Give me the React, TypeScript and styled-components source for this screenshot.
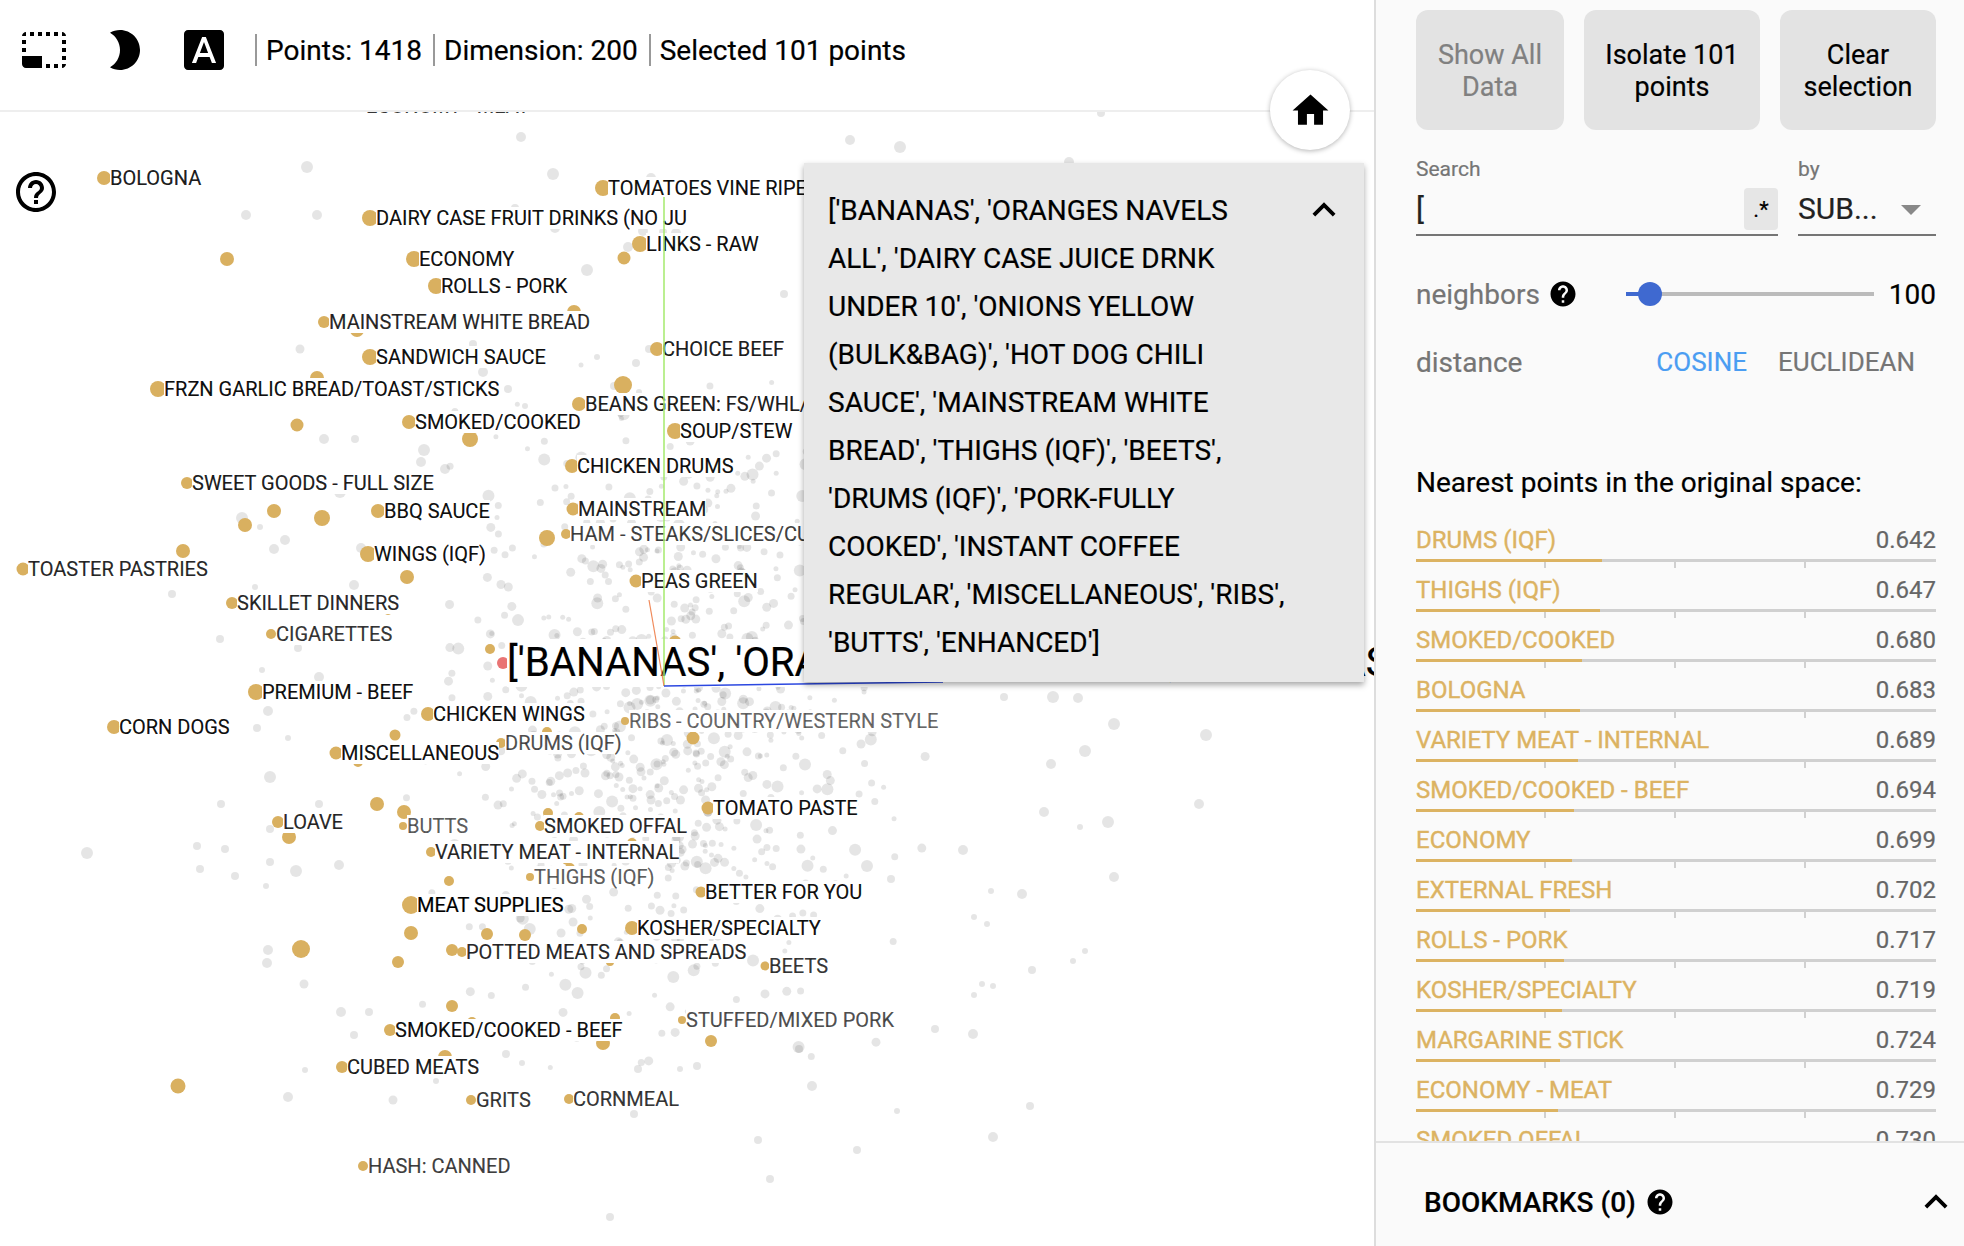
import React from "react";
import styled, { createGlobalStyle } from "styled-components";

const GOLD = "#d9b060";

const GlobalStyle = createGlobalStyle`
  html, body {
    margin: 0;
    padding: 0;
    background: #fff;
    font-family: Roboto, "Liberation Sans", sans-serif;
    color: #000;
    -webkit-text-stroke: 0.2px;
  }
`;

// [text, textX, centerY, dotX, dotRadius, textAlpha]
type LabelRow = [string, number, number, number, number, number];

const POINT_LABELS: LabelRow[] = [
  ["ECONOMY - MEAT", 366, 106, 361, 5, 0.8],
  ["BOLOGNA", 110, 178, 104, 7, 0.9],
  ["TOMATOES VINE RIPE", 608, 188, 603, 8, 0.95],
  ["DAIRY CASE FRUIT DRINKS (NO JU", 376, 218, 370, 8, 0.95],
  ["LINKS - RAW", 646, 244, 640, 8, 0.95],
  ["ECONOMY", 419, 259, 414, 8, 0.95],
  ["ROLLS - PORK", 441, 286, 436, 8, 0.95],
  ["MAINSTREAM WHITE BREAD", 329, 322, 324, 6, 0.85],
  ["SANDWICH SAUCE", 376, 357, 370, 8, 0.95],
  ["FRZN GARLIC BREAD/TOAST/STICKS", 164, 389, 158, 8, 0.95],
  ["CHOICE BEEF", 662, 349, 657, 7, 0.9],
  ["BEANS GREEN: FS/WHL/", 585, 404, 579, 7, 0.9],
  ["SMOKED/COOKED", 415, 422, 409, 7, 0.95],
  ["SOUP/STEW", 680, 431, 675, 8, 0.95],
  ["CHICKEN DRUMS", 577, 466, 572, 7, 0.95],
  ["SWEET GOODS - FULL SIZE", 192, 483, 187, 6, 0.9],
  ["BBQ SAUCE", 384, 511, 378, 7, 0.95],
  ["MAINSTREAM", 578, 509, 573, 6.5, 0.9],
  ["HAM - STEAKS/SLICES/CU", 570, 534, 566, 5, 0.75],
  ["WINGS (IQF)", 374, 554, 368, 8, 0.95],
  ["TOASTER PASTRIES", 28, 569, 23, 6.5, 0.85],
  ["PEAS GREEN", 641, 581, 636, 6.5, 0.9],
  ["SKILLET DINNERS", 237, 603, 232, 6, 0.85],
  ["CIGARETTES", 276, 634, 271, 5, 0.8],
  ["PREMIUM - BEEF", 262, 692, 256, 8, 0.95],
  ["CHICKEN WINGS", 433, 714, 428, 7, 0.95],
  ["RIBS - COUNTRY/WESTERN STYLE", 629, 721, 625, 4, 0.6],
  ["CORN DOGS", 119, 727, 114, 7, 0.95],
  ["DRUMS (IQF)", 505, 743, 501, 5, 0.7],
  ["MISCELLANEOUS", 341, 753, 336, 6.5, 0.95],
  ["TOMATO PASTE", 713, 808, 708, 6.5, 0.95],
  ["LOAVE", 283, 822, 278, 6, 0.85],
  ["BUTTS", 407, 826, 403, 4, 0.65],
  ["SMOKED OFFAL", 544, 826, 540, 5, 0.85],
  ["VARIETY MEAT - INTERNAL", 435, 852, 431, 5, 0.85],
  ["THIGHS (IQF)", 534, 877, 530, 4, 0.65],
  ["BETTER FOR YOU", 705, 892, 701, 5.5, 0.95],
  ["MEAT SUPPLIES", 417, 905, 411, 9, 1],
  ["KOSHER/SPECIALTY", 637, 928, 632, 7, 0.95],
  ["POTTED MEATS AND SPREADS", 466, 952, 462, 5, 0.85],
  ["BEETS", 769, 966, 765, 4.5, 0.8],
  ["STUFFED/MIXED PORK", 686, 1020, 682, 4, 0.7],
  ["SMOKED/COOKED - BEEF", 395, 1030, 390, 6, 0.95],
  ["CUBED MEATS", 347, 1067, 342, 6, 0.9],
  ["GRITS", 476, 1100, 471, 5, 0.8],
  ["CORNMEAL", 573, 1099, 569, 5, 0.8],
  ["HASH: CANNED", 368, 1166, 363, 5, 0.75],
];

// selected points that have no label drawn
const GOLD_DOTS: number[][] = [
  [227, 259, 7], [624, 258, 6.5], [406, 222, 7], [574, 312, 7], [357, 330, 7], [317, 378, 7],
  [623, 385, 9], [656, 404, 6], [297, 425, 6.5], [470, 439, 8], [274, 511, 7], [322, 518, 8],
  [245, 525, 7], [547, 538, 8], [183, 551, 7], [407, 577, 7], [388, 610, 5], [490, 649, 5],
  [675, 642, 6.5], [395, 735, 5.5], [547, 732, 5], [693, 738, 6.5], [358, 762, 5], [377, 804, 7],
  [404, 812, 7], [548, 813, 5], [579, 817, 5], [289, 837, 7], [454, 858, 4], [567, 860, 5],
  [570, 868, 5], [632, 843, 5], [449, 881, 5], [411, 933, 7], [487, 934, 6], [525, 935, 6],
  [582, 929, 5], [301, 949, 9], [452, 950, 6], [398, 962, 6], [610, 962, 4], [452, 1006, 6],
  [472, 1022, 5], [615, 1018, 5], [603, 1043, 7], [445, 1057, 7], [178, 1086, 7.5], [711, 1041, 6],
];

const GRAY_OUTLIERS: number[][] = [
  [1004, 697, 4], [1053, 697, 6], [1078, 698, 5], [1114, 724, 6], [1206, 735, 6], [1085, 751, 6],
  [1051, 764, 5], [1199, 804, 5], [1044, 812, 5], [1108, 822, 6], [1080, 827, 3], [963, 850, 5],
  [1114, 877, 5], [1022, 894, 5], [991, 891, 3], [974, 917, 3], [987, 924, 3], [1085, 951, 3],
  [1073, 961, 3], [1032, 970, 4], [982, 984, 3], [993, 986, 3], [974, 995, 3], [935, 1029, 4],
  [973, 1034, 5], [812, 1086, 5], [1030, 1106, 4], [897, 1111, 3], [993, 1137, 5], [758, 1140, 4],
  [857, 1150, 4], [770, 1179, 4], [610, 1217, 4], [867, 866, 6], [891, 879, 4], [799, 1049, 4],
  [680, 1069, 3], [697, 1066, 4], [638, 1069, 4], [850, 140, 5], [900, 147, 6], [1069, 162, 5],
  [1101, 113, 4], [784, 294, 4], [307, 167, 6], [521, 137, 5], [553, 174, 6], [651, 178, 5],
  [246, 215, 5], [317, 215, 5], [515, 208, 4], [555, 228, 5], [643, 231, 5], [628, 247, 5],
  [587, 270, 6], [558, 328, 5], [300, 349, 4.5], [473, 344, 4], [483, 372, 5], [508, 389, 4],
  [649, 349, 4], [636, 363, 4], [597, 357, 3], [581, 365, 2.5], [614, 386, 4], [639, 392, 3],
  [525, 406, 3], [663, 232, 4], [676, 233, 5], [690, 237, 4], [324, 439, 5], [355, 439, 4],
  [424, 450, 6], [421, 462, 5], [445, 469, 5], [340, 492, 6], [242, 518, 6], [260, 527, 3],
  [285, 540, 5], [274, 549, 5], [361, 548, 5], [172, 594, 4], [255, 587, 3], [354, 585, 5],
  [220, 639, 4], [298, 648, 4], [262, 670, 3], [319, 677, 5], [268, 711, 5], [257, 728, 4],
  [288, 738, 3], [270, 777, 6], [221, 804, 4], [319, 804, 4], [87, 853, 6], [197, 846, 4],
  [225, 849, 4], [200, 869, 4], [235, 876, 4], [266, 886, 3], [270, 862, 4], [296, 871, 6],
  [339, 865, 5], [270, 829, 4], [268, 950, 5], [267, 963, 5], [304, 984, 4.5], [341, 1012, 5],
  [369, 1012, 4], [354, 1035, 4], [305, 1070, 3], [288, 1097, 5], [393, 1100, 4.5], [634, 1114, 4],
  [436, 1081, 3], [506, 1054, 4], [522, 1063, 3], [623, 385, 5], [301, 949, 5], [377, 804, 4],
];

// the dense middle of the cloud, seeded so every render is the same
const makeCloud = (count: number) => {
  let seed = 20731;
  const rand = () => {
    seed = (seed * 16807) % 2147483647;
    return seed / 2147483647;
  };
  const dots: number[][] = [];
  while (dots.length < count) {
    const u = Math.sqrt(-2 * Math.log(rand() + 1e-6));
    const v = rand() * Math.PI * 2;
    const x = 670 + u * Math.cos(v) * 110;
    const y = 720 + u * Math.sin(v) * 170;
    if (x < 400 || x > 960 || y < 380 || y > 1070) continue;
    const r = rand();
    dots.push([x, y, r > 0.92 ? 6 : r > 0.6 ? 4.5 : r > 0.25 ? 3.5 : 2.5]);
  }
  return dots;
};

const CLOUD = makeCloud(900);

const NEAREST = [
  ["DRUMS (IQF)", "0.642", 186],
  ["THIGHS (IQF)", "0.647", 184],
  ["SMOKED/COOKED", "0.680", 166],
  ["BOLOGNA", "0.683", 164],
  ["VARIETY MEAT - INTERNAL", "0.689", 162],
  ["SMOKED/COOKED - BEEF", "0.694", 158],
  ["ECONOMY", "0.699", 156],
  ["EXTERNAL FRESH", "0.702", 154],
  ["ROLLS - PORK", "0.717", 148],
  ["KOSHER/SPECIALTY", "0.719", 146],
  ["MARGARINE STICK", "0.724", 144],
  ["ECONOMY - MEAT", "0.729", 142],
  ["SMOKED OFFAL", "0.730", 140],
] as const;

const Page = styled.div`
  display: flex;
  width: 100%;
  height: 100vh;
  min-height: 1246px;
  overflow: hidden;
`;

const LeftPane = styled.div`
  position: relative;
  flex: 0 0 1374px;
  display: flex;
  flex-direction: column;
`;

const Header = styled.div`
  flex: 0 0 100px;
  display: flex;
  align-items: center;
  padding-left: 20px;
  padding-bottom: 10px;
  border-bottom: 2px solid #eee;
`;

const ToolIcons = styled.div`
  display: flex;
  gap: 32px;
  margin-right: 27px;
`;

const Stat = styled.div`
  height: 32px;
  line-height: 34px;
  padding: 0 11px 0 9px;
  border-left: 2px solid #999;
  font-size: 28px;
  white-space: nowrap;
`;

const Canvas = styled.div`
  position: relative;
  flex: 1;
  overflow: hidden;
`;

const CanvasLayer = styled.svg`
  position: absolute;
  left: 0;
  top: 0;
  width: 1374px;
  height: 1134px;
`;

const PointLabel = styled.span.attrs<{ $x: number; $y: number; $alpha: number }>((p) => ({
  style: { left: p.$x, top: p.$y - 112 - 11, color: `rgba(0,0,0,${p.$alpha})` },
}))<{ $x: number; $y: number; $alpha: number }>`
  position: absolute;
  height: 22px;
  line-height: 22px;
  font-size: 20px;
  background: #fff;
  white-space: nowrap;
`;

const FocusLabel = styled.span`
  position: absolute;
  left: 507px;
  top: 527px;
  height: 48px;
  line-height: 48px;
  font-size: 40.2px;
  background: #fff;
  white-space: nowrap;
`;

const HomeButton = styled.button`
  position: absolute;
  left: 1270px;
  top: 70px;
  width: 80px;
  height: 80px;
  padding: 0;
  display: flex;
  align-items: center;
  justify-content: center;
  border: 0;
  border-radius: 50%;
  background: #fff;
  box-shadow: 0 1px 5px rgba(0, 0, 0, 0.3);
`;

const HelpBadge = styled.div`
  position: absolute;
  left: 12px;
  top: 168px;
  line-height: 0;
`;

const Details = styled.div`
  position: absolute;
  left: 804px;
  top: 163px;
  width: 560px;
  box-sizing: border-box;
  padding: 24px 17px 15px 24px;
  display: flex;
  justify-content: space-between;
  align-items: flex-start;
  background: #e8e8e8;
  box-shadow: 0 3px 6px rgba(0, 0, 0, 0.35);
`;

const DetailsText = styled.div`
  width: 462px;
  font-size: 28px;
  line-height: 48px;
`;

const SidePanel = styled.div`
  flex: 1;
  display: flex;
  flex-direction: column;
  min-width: 0;
  background: #fafafa;
  border-left: 2px solid #ddd;
`;

const SideScroll = styled.div`
  flex: 1;
  min-height: 0;
  overflow: hidden;
  padding: 10px 28px 0 40px;
`;

const ActionRow = styled.div`
  display: grid;
  grid-template-columns: 148px 176px 156px;
  gap: 20px;
`;

const ActionButton = styled.button<{ $muted?: boolean }>`
  height: 120px;
  padding: 2px 10px 0;
  border: 0;
  border-radius: 12px;
  background: #e3e3e3;
  color: ${(p) => (p.$muted ? "#808080" : "#000")};
  font-family: inherit;
  font-size: 27px;
  line-height: 32px;
`;

const SearchRow = styled.div`
  display: grid;
  grid-template-columns: 362px 138px;
  gap: 20px;
  margin-top: 26px;
`;

const FieldLabel = styled.div`
  font-size: 21px;
  line-height: 26px;
  color: #757575;
`;

const FieldBody = styled.div`
  height: 52px;
  display: flex;
  align-items: center;
  justify-content: space-between;
  border-bottom: 2px solid #757575;
  color: #222;
`;

const SearchValue = styled.span`
  font-size: 30px;
`;

const RegexToggle = styled.span`
  width: 34px;
  height: 42px;
  margin-top: 6px;
  align-self: flex-start;
  display: flex;
  align-items: center;
  justify-content: center;
  border-radius: 4px;
  background: #e6e6e6;
  color: #000;
  font-size: 22px;
`;

const CaretDown = styled.span`
  width: 0;
  height: 0;
  margin: 4px 15px 0 0;
  border-left: 10px solid transparent;
  border-right: 10px solid transparent;
  border-top: 10px solid #888;
`;

const NeighborsRow = styled.div`
  display: flex;
  align-items: center;
  height: 40px;
  margin-top: 38px;
  font-size: 28px;
  color: #757575;
`;

const DistanceRow = styled(NeighborsRow)`
  margin-top: 28px;
`;

const NeighborsLabel = styled.div`
  flex: 0 0 210px;
  display: flex;
  align-items: center;
  gap: 8px;
`;

const SliderTrack = styled.div`
  position: relative;
  flex: 0 0 248px;
  height: 4px;
  background: #bbb;
`;

const SliderFill = styled.div`
  width: 24px;
  height: 100%;
  background: #3f69d0;
`;

const SliderThumb = styled.div`
  position: absolute;
  left: 12px;
  top: -10px;
  width: 24px;
  height: 24px;
  border-radius: 50%;
  background: #3f69d0;
`;

const SliderValue = styled.div`
  flex: 1;
  text-align: right;
  color: #000;
`;

const DistanceOptions = styled.div`
  margin-left: auto;
  display: flex;
  gap: 31px;
  padding-right: 21px;
`;

const DistanceOption = styled.span<{ $active?: boolean }>`
  font-size: 26px;
  color: ${(p) => (p.$active ? "#4a9df2" : "#757575")};
`;

const SectionTitle = styled.div`
  margin-top: 81px;
  font-size: 28px;
  line-height: 40px;
`;

const NearestList = styled.div`
  margin-top: 17px;
`;

const NearestRow = styled.div`
  height: 50px;
`;

const NearestLine = styled.div`
  height: 39px;
  display: flex;
  align-items: center;
  justify-content: space-between;
  font-size: 24px;
`;

const NearestName = styled.span`
  color: #dcb362;
  -webkit-text-stroke: 0.4px;
`;

const NearestValue = styled.span`
  color: #666;
`;

const BarTrack = styled.div`
  height: 3px;
  background: #d0d0d0;
`;

const BarFill = styled.div`
  height: 100%;
  background: #dcb362;
`;

const TickRow = styled.div`
  height: 6px;
  display: grid;
  grid-template-columns: repeat(4, 1fr);
`;

const Tick = styled.div`
  border-right: 2px solid #d0d0d0;

  &:last-child {
    border-right: 0;
  }
`;

const Bookmarks = styled.div`
  flex: 0 0 88px;
  display: flex;
  align-items: center;
  gap: 9px;
  padding: 15px 5px 0 48px;
  border-top: 2px solid #e2e2e2;
  font-size: 28px;
  font-weight: 500;
`;

const ChevronSlot = styled.div`
  margin-left: auto;
  line-height: 0;
`;

const HELP_PATH =
  "M12 2C6.48 2 2 6.48 2 12s4.48 10 10 10 10-4.48 10-10S17.52 2 12 2zm1 17h-2v-2h2v2zm2.07-7.75l-.9.92C13.45 12.9 13 13.5 13 15h-2v-.5c0-1.1.45-2.1 1.17-2.83l1.24-1.26c.37-.36.59-.86.59-1.41 0-1.1-.9-2-2-2s-2 .9-2 2H8c0-2.21 1.79-4 4-4s4 1.79 4 4c0 .88-.36 1.68-.93 2.25z";

const Icon = ({ d, size = 48 }: { d: string; size?: number }) => (
  <svg width={size} height={size} viewBox="0 0 24 24" fill="#000">
    <path d={d} />
  </svg>
);

const Chevron = () => <Icon size={46} d="M7.41 15.41L12 10.83l4.59 4.58L18 14l-6-6-6 6z" />;

const App = () => (
  <Page>
    <GlobalStyle />
    <LeftPane>
      <Header>
        <ToolIcons>
          <Icon d="M23 15h-2v2h2v-2zm0-4h-2v2h2v-2zm0 8h-2v2c1 0 2-1 2-2zM15 3h-2v2h2V3zm8 4h-2v2h2V7zm-2-4v2h2c0-1-1-2-2-2zM3 21h8v-6H1v4c0 1.1.9 2 2 2zM3 7H1v2h2V7zm12 12h-2v2h2v-2zm4-16h-2v2h2V3zm0 16h-2v2h2v-2zM3 3C2 3 1 4 1 5h2V3zm0 8H1v2h2v-2zm8-8H9v2h2V3zM7 3H5v2h2V3z" />
          <Icon d="M10 2c-1.82 0-3.53.5-5 1.35C7.99 5.08 10 8.3 10 12s-2.01 6.92-5 8.65C6.47 21.5 8.18 22 10 22c5.52 0 10-4.48 10-10S15.52 2 10 2z" />
          <Icon d="M9.93 13.5h4.14L12 7.98zM20 2H4c-1.1 0-2 .9-2 2v16c0 1.1.9 2 2 2h16c1.1 0 2-.9 2-2V4c0-1.1-.9-2-2-2zm-4.05 16.5l-1.14-3H9.17l-1.12 3H5.96l5.11-13h1.86l5.11 13h-2.09z" />
        </ToolIcons>
        <Stat>Points: 1418</Stat>
        <Stat>Dimension: 200</Stat>
        <Stat>Selected 101 points</Stat>
      </Header>

      <Canvas>
        <CanvasLayer viewBox="0 112 1374 1134">
          <g fill="#000" fillOpacity="0.1">
            {CLOUD.concat(GRAY_OUTLIERS).map(([x, y, r], i) => (
              <circle key={i} cx={x} cy={y} r={r} />
            ))}
          </g>
          <g fill={GOLD}>
            {GOLD_DOTS.map(([x, y, r], i) => (
              <circle key={i} cx={x} cy={y} r={r} />
            ))}
            {POINT_LABELS.map(([name, , y, dotX, r]) => (
              <circle key={name} cx={dotX} cy={y} r={r} />
            ))}
          </g>
          <circle cx={503} cy={663} r={6} fill="#e97474" />
        </CanvasLayer>

        {POINT_LABELS.map(([name, x, y, , , alpha]) => (
          <PointLabel key={name} $x={x} $y={y} $alpha={alpha}>
            {name}
          </PointLabel>
        ))}
        <FocusLabel>['BANANAS', 'ORANGES NAVELS ALL', 'DAIRY CASE JUICE DRNK UNDER 10']</FocusLabel>

        <CanvasLayer viewBox="0 112 1374 1134">
          <line x1={664} y1={686} x2={664} y2={197} stroke="#a4ea6c" strokeWidth={1.5} />
          <line x1={664} y1={686} x2={649} y2={600} stroke="#f08a5a" strokeWidth={1.2} />
          <line x1={664} y1={686} x2={943} y2={682} stroke="#2c48e0" strokeWidth={1.5} />
        </CanvasLayer>
      </Canvas>

      <HelpBadge>
        <Icon d="M11 18h2v-2h-2v2zm1-16C6.48 2 2 6.48 2 12s4.48 10 10 10 10-4.48 10-10S17.52 2 12 2zm0 18c-4.41 0-8-3.59-8-8s3.59-8 8-8 8 3.59 8 8-3.59 8-8 8zm0-14c-2.21 0-4 1.79-4 4h2c0-1.1.9-2 2-2s2 .9 2 2c0 2-3 1.75-3 5h2c0-2.25 3-2.5 3-5 0-2.21-1.79-4-4-4z" />
      </HelpBadge>

      <HomeButton>
        <Icon size={43} d="M10 20v-6h4v6h5v-8h3L12 3 2 12h3v8z" />
      </HomeButton>

      <Details>
        <DetailsText>
          ['BANANAS', 'ORANGES NAVELS ALL', 'DAIRY CASE JUICE DRNK UNDER 10', 'ONIONS YELLOW
          (BULK&amp;BAG)', 'HOT DOG CHILI SAUCE', 'MAINSTREAM WHITE BREAD', 'THIGHS (IQF)',
          'BEETS', 'DRUMS (IQF)', 'PORK-FULLY COOKED', 'INSTANT COFFEE REGULAR',
          'MISCELLANEOUS', 'RIBS', 'BUTTS', 'ENHANCED']
        </DetailsText>
        <Chevron />
      </Details>
    </LeftPane>

    <SidePanel>
      <SideScroll>
        <ActionRow>
          <ActionButton $muted>Show All Data</ActionButton>
          <ActionButton>Isolate 101 points</ActionButton>
          <ActionButton>Clear selection</ActionButton>
        </ActionRow>

        <SearchRow>
          <div>
            <FieldLabel>Search</FieldLabel>
            <FieldBody>
              <SearchValue>[</SearchValue>
              <RegexToggle>.*</RegexToggle>
            </FieldBody>
          </div>
          <div>
            <FieldLabel>by</FieldLabel>
            <FieldBody>
              <SearchValue>SUB...</SearchValue>
              <CaretDown />
            </FieldBody>
          </div>
        </SearchRow>

        <NeighborsRow>
          <NeighborsLabel>
            neighbors
            <Icon size={30} d={HELP_PATH} />
          </NeighborsLabel>
          <SliderTrack>
            <SliderFill />
            <SliderThumb />
          </SliderTrack>
          <SliderValue>100</SliderValue>
        </NeighborsRow>

        <DistanceRow>
          distance
          <DistanceOptions>
            <DistanceOption $active>COSINE</DistanceOption>
            <DistanceOption>EUCLIDEAN</DistanceOption>
          </DistanceOptions>
        </DistanceRow>

        <SectionTitle>Nearest points in the original space:</SectionTitle>

        <NearestList>
          {NEAREST.map(([name, value, width]) => (
            <NearestRow key={name}>
              <NearestLine>
                <NearestName>{name}</NearestName>
                <NearestValue>{value}</NearestValue>
              </NearestLine>
              <BarTrack>
                <BarFill style={{ width }} />
              </BarTrack>
              <TickRow>
                <Tick />
                <Tick />
                <Tick />
                <Tick />
              </TickRow>
            </NearestRow>
          ))}
        </NearestList>
      </SideScroll>

      <Bookmarks>
        BOOKMARKS (0)
        <Icon size={30} d={HELP_PATH} />
        <ChevronSlot>
          <Chevron />
        </ChevronSlot>
      </Bookmarks>
    </SidePanel>
  </Page>
);

export default App;
